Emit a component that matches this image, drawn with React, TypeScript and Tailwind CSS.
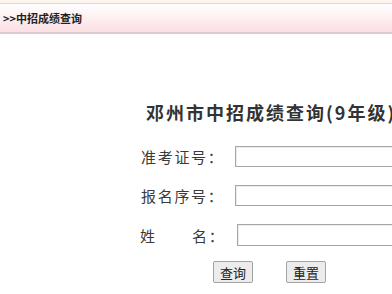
import React from "react";

export default function App() {
  const font = { fontFamily: '"Noto Sans CJK SC", "Noto Sans", sans-serif' };
  return (
    <div className="w-[392px] h-[294px] overflow-hidden bg-white" style={font}>
      <div className="h-[3px] bg-[#fbf5ee]" />
      <div className="h-[31px] border-t border-t-[#e6d6d6] border-b-2 border-b-[#dbcccc] bg-gradient-to-b from-white to-[#fcdfe3] flex items-center pl-[3px] text-[11px] font-bold text-[#222] leading-none">
        &gt;&gt;中招成绩查询
      </div>
      <div className="mt-[66px] pl-[146px] whitespace-nowrap text-[18px] leading-[25px] font-bold tracking-[2px] text-[#333]">
        邓州市中招成绩查询(9年级)
      </div>
      <div className="mt-[21px] flex flex-col gap-[18px] text-[15px] text-[#3a3a3a]">
        <div className="flex items-center h-[21px]">
          <div className="w-[235px] shrink-0 pl-[141px] tracking-[1.7px] whitespace-nowrap leading-none">准考证号：</div>
          <div className="h-[21px] w-[200px] shrink-0 border border-[#a6a6a6] bg-white shadow-[inset_1px_1px_1px_rgba(0,0,0,0.08)]" />
        </div>
        <div className="flex items-center h-[21px]">
          <div className="w-[235px] shrink-0 pl-[141px] tracking-[1.7px] whitespace-nowrap leading-none">报名序号：</div>
          <div className="h-[21px] w-[200px] shrink-0 border border-[#a6a6a6] bg-white shadow-[inset_1px_1px_1px_rgba(0,0,0,0.08)]" />
        </div>
        <div className="flex items-center h-[22px]">
          <div className="w-[237px] shrink-0 pl-[140px] whitespace-nowrap leading-none flex">
            <span>姓</span>
            <span className="ml-[37px] tracking-[1.7px]">名：</span>
          </div>
          <div className="h-[22px] w-[200px] shrink-0 border border-[#a6a6a6] bg-white shadow-[inset_1px_1px_1px_rgba(0,0,0,0.08)]" />
        </div>
      </div>
      <div className="mt-[15px] flex pl-[213px] gap-[33px]">
        <div className="w-[40px] h-[22px] border border-[#a3a3a3] rounded-[2px] bg-[#ececec] flex items-center justify-center text-[13px] text-[#222] leading-none">
          查询
        </div>
        <div className="w-[40px] h-[22px] border border-[#a3a3a3] rounded-[2px] bg-[#ececec] flex items-center justify-center text-[13px] text-[#222] leading-none">
          重置
        </div>
      </div>
    </div>
  );
}
